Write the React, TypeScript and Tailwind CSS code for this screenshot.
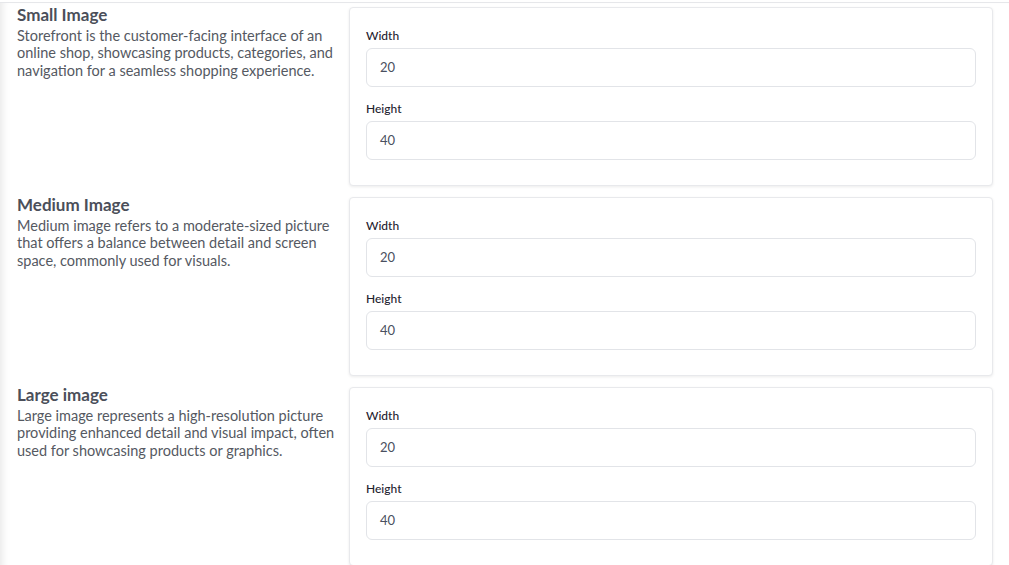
import React from "react";

type Section = { title: string; lines: string[] };

const sections: Section[] = [
  {
    title: "Small Image",
    lines: [
      "Storefront is the customer-facing interface of an",
      "online shop, showcasing products, categories, and",
      "navigation for a seamless shopping experience.",
    ],
  },
  {
    title: "Medium Image",
    lines: [
      "Medium image refers to a moderate-sized picture",
      "that offers a balance between detail and screen",
      "space, commonly used for visuals.",
    ],
  },
  {
    title: "Large image",
    lines: [
      "Large image represents a high-resolution picture",
      "providing enhanced detail and visual impact, often",
      "used for showcasing products or graphics.",
    ],
  },
];

function Field({ label, value }: { label: string; value: string }) {
  return (
    <div className="flex flex-col">
      <label className="text-[12px] leading-[16px] font-medium text-[#1f2330]">{label}</label>
      <div className="mt-[4px] h-[39px] rounded-[6px] border border-[#e2e4e8] bg-white flex items-center pl-[13px] text-[13px] text-[#4a5060]">
        {value}
      </div>
    </div>
  );
}

export default function App() {
  return (
    <div
      className="w-[1009px] h-[565px] overflow-hidden bg-white"
      style={{ fontFamily: "Lato, 'Noto Sans', sans-serif" }}
    >
      <div className="mt-[2px] border-t border-[#e6e7ea] h-full shadow-[inset_9px_0_8px_-7px_rgba(0,0,0,0.10)] pl-[17px] pr-[16px] pt-[1px] flex flex-col gap-[8px]">
        {sections.map((s) => (
          <div key={s.title} className="flex">
            <div className="w-[332px] shrink-0">
              <h2 className="text-[17px] leading-[21px] font-bold text-[#4b4f5a]">{s.title}</h2>
              <p className="mt-[1.5px] text-[14.5px] leading-[17.5px] text-[#555962]">
                {s.lines.map((l, i) => (
                  <span key={i} className="block whitespace-nowrap">
                    {l}
                  </span>
                ))}
              </p>
            </div>
            <div className="flex-1 mt-[3px] h-[179px] shrink-0 rounded-[4px] border border-[#e8e9ec] bg-white shadow-[0_1px_3px_rgba(0,0,0,0.08)] px-[16px] pt-[20px] flex flex-col gap-[14px]">
              <Field label="Width" value="20" />
              <Field label="Height" value="40" />
            </div>
          </div>
        ))}
      </div>
    </div>
  );
}
